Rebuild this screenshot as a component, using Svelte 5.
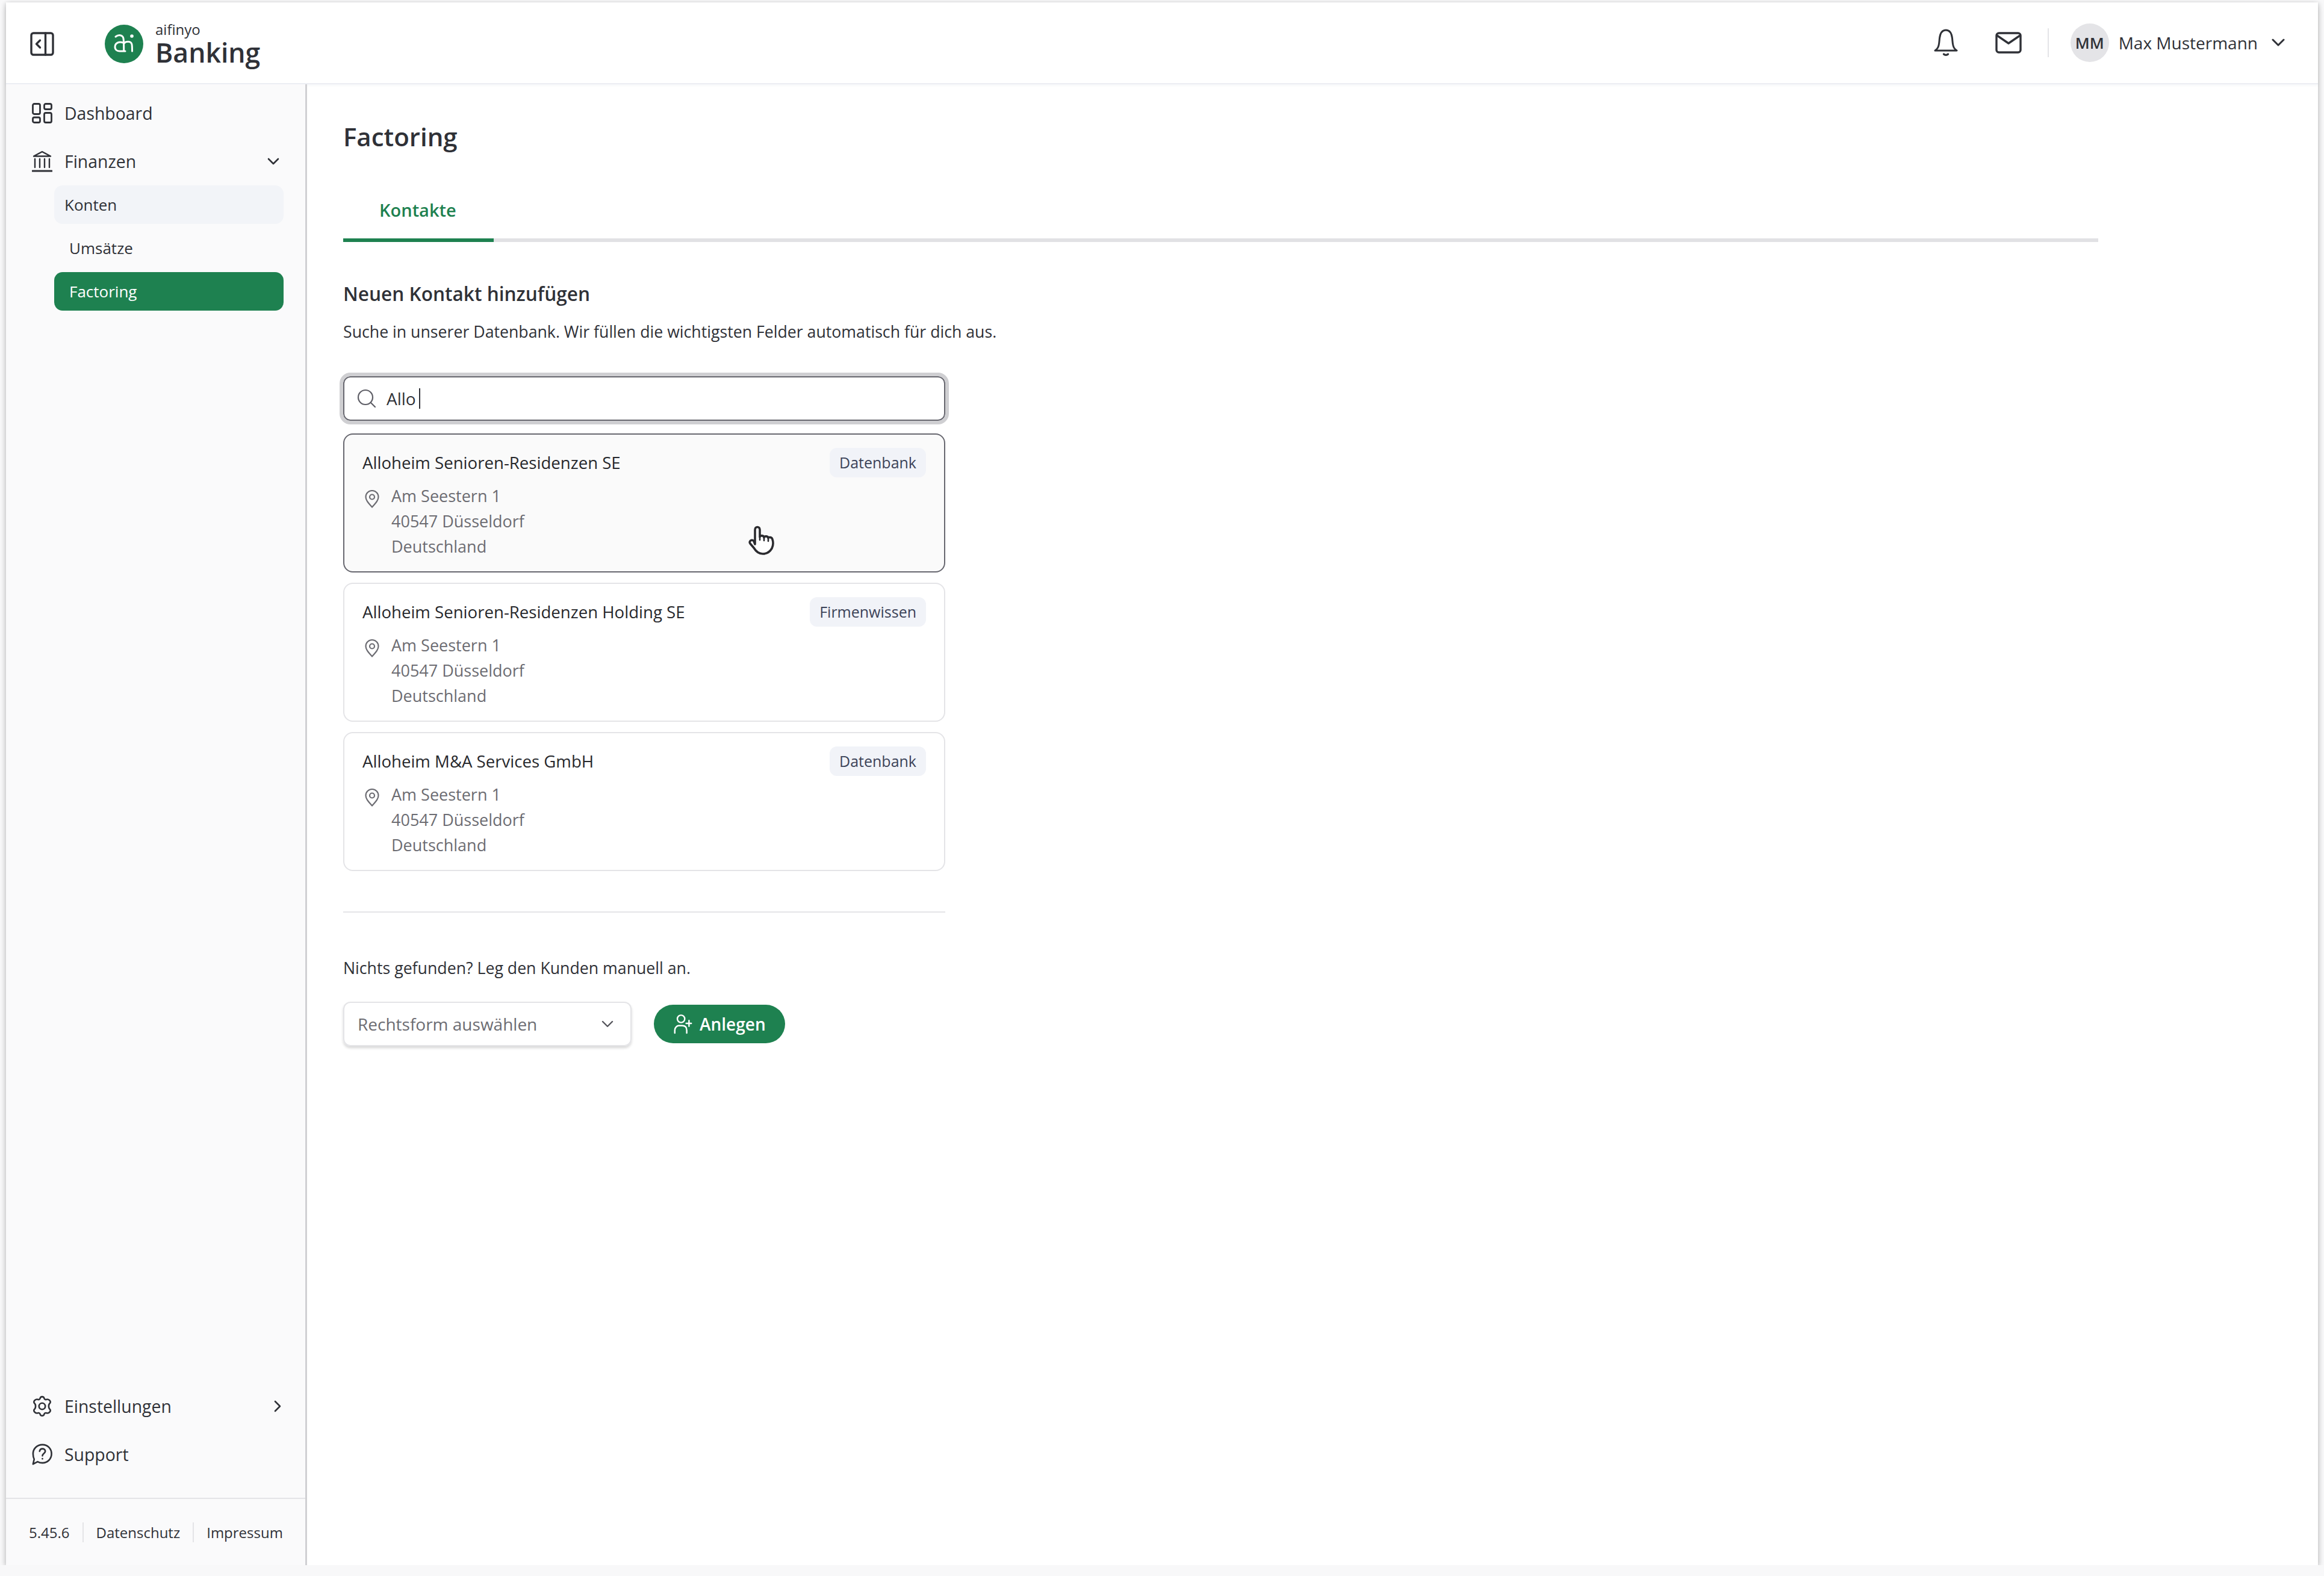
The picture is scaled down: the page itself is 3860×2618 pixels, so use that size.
<script>
  const contacts = [
    { name: "Alloheim Senioren-Residenzen SE", source: "Datenbank", hovered: true },
    { name: "Alloheim Senioren-Residenzen Holding SE", source: "Firmenwissen", hovered: false },
    { name: "Alloheim M&A Services GmbH", source: "Datenbank", hovered: false }
  ];
  const address = ["Am Seestern 1", "40547 Düsseldorf", "Deutschland"];
</script>

<div class="frame">
  <header class="topbar">
    <div class="brand">
      <svg class="toggle" viewBox="0 0 40 40" fill="none" stroke="currentColor" stroke-width="3.4" stroke-linecap="round" stroke-linejoin="round">
        <rect x="2" y="2" width="36" height="36" rx="3.5" />
        <path d="M25.500 2v36M16.500 14l-6 6 6 6" />
      </svg>
      <svg class="logo" viewBox="0 0 64 64">
        <circle cx="32" cy="32" r="32" fill="#1e8150" />
        <g fill="none" stroke="#fff" stroke-width="3" stroke-linecap="round">
          <path d="M18 20c5-4 12-3 13 3 .7 4 .7 11 .7 20" />
          <path d="M31 30c-8-3-14 1-14 7 0 5 4 7 8 7h9" />
          <path d="M32 31c3-4 12-4 13 2 .5 3 .5 7 .5 11" />
        </g>
        <circle cx="45" cy="19" r="2.800" fill="#fff" />
      </svg>
      <div class="wordmark">
        <span class="company">aifinyo</span>
        <span class="product">Banking</span>
      </div>
    </div>
    <div class="account">
      <svg class="bell" viewBox="0 0 40 46" fill="none" stroke="currentColor" stroke-width="3" stroke-linecap="round" stroke-linejoin="round">
        <path d="M2 36c3-2 5-4.500 6-8.500 1-4 1-7 1.500-12C10.500 7 14 2 20 2s9.500 5 10.500 13.500c.5 5 .5 8 1.500 12 1 4 3 6.500 6 8.500z" />
        <path d="M16.500 42c2 1.800 5 1.800 7 0" stroke-width="3.400" />
      </svg>
      <svg class="mail" viewBox="0 0 44 36" fill="none" stroke="currentColor" stroke-width="3.400" stroke-linecap="round" stroke-linejoin="round">
        <rect x="2" y="2" width="40" height="32" rx="4" />
        <path d="M3 6l19 13L41 6" />
      </svg>
      <span class="rule"></span>
      <span class="avatar">MM</span>
      <span class="username">Max Mustermann</span>
      <svg class="chev-user" viewBox="0 0 22 14" fill="none" stroke="currentColor" stroke-width="3" stroke-linecap="round" stroke-linejoin="round"><path d="M2 2l9 9 9-9" /></svg>
    </div>
  </header>

  <div class="body">
    <aside class="sidebar">
      <nav class="nav">
        <a class="item">
          <svg class="icon" viewBox="0 0 34 34" fill="none" stroke="currentColor" stroke-width="2.800" stroke-linejoin="round">
            <rect x="1.500" y="1.500" width="12" height="17" rx="2.500" />
            <rect x="20.500" y="1.500" width="12" height="9" rx="2.500" />
            <rect x="1.500" y="24" width="12" height="8.500" rx="2.500" />
            <rect x="20.500" y="16.500" width="12" height="16" rx="2.500" />
          </svg>
          Dashboard
        </a>
        <a class="item">
          <svg class="icon" viewBox="0 0 34 36" fill="none" stroke="currentColor" stroke-width="2.400" stroke-linecap="round" stroke-linejoin="round">
            <path d="M3 9.500L17 2l14 7.500z" />
            <path d="M5 14v14M13 14v14M21 14v14M29 14v14" />
            <path d="M1 34h32" stroke-width="3" />
          </svg>
          Finanzen
          <svg class="chev chev-down" viewBox="0 0 20 12" fill="none" stroke="currentColor" stroke-width="2.600" stroke-linecap="round" stroke-linejoin="round"><path d="M2 2l8 8 8-8" /></svg>
        </a>
        <a class="sub sub-open">Konten</a>
        <a class="sub">Umsätze</a>
        <a class="sub sub-active">Factoring</a>
      </nav>

      <nav class="nav nav-bottom">
        <a class="item">
          <svg class="icon" viewBox="0 0 34 38" fill="none" stroke="currentColor" stroke-width="2.800" stroke-linejoin="round">
            <path d="M13.500 5c.8-3.600 6.200-3.600 7 0 .4 1.800 2.300 2.800 4 2.200 4.500-1.500 9.500 4 5.500 7-2 2-2 7.600 0 9.600 4 3-1 8.500-5.500 7-1.700-.6-3.600.4-4 2.200-.8 3.600-6.200 3.600-7 0-.4-1.800-2.300-2.800-4-2.200-4.500 1.500-9.500-4-5.500-7 2-2 2-7.600 0-9.600-4-3 1-8.500 5.500-7 1.700.6 3.600-.4 4-2.200z" />
            <circle cx="17" cy="19" r="5.500" />
          </svg>
          Einstellungen
          <svg class="chev chev-right" viewBox="0 0 12 20" fill="none" stroke="currentColor" stroke-width="2.600" stroke-linecap="round" stroke-linejoin="round"><path d="M2 2l8 8-8 8" /></svg>
        </a>
        <a class="item">
          <svg class="icon" viewBox="0 0 36 38" fill="none" stroke="currentColor" stroke-width="2.800" stroke-linecap="round" stroke-linejoin="round">
            <path d="M18.500 2C28 2 34.500 9 34.500 18S27.500 34 18.500 34c-3 0-6-.8-8.500-2.200L2 36l2-8.500C2.700 25 2 21.500 2 18 2 9 9 2 18.500 2z" />
            <path d="M13.500 13.500c.6-3 2.600-4.500 5-4.500 2.800 0 5 1.800 5 4.500 0 4-5 4-5 8" />
            <path d="M18.500 26.500v.3" />
          </svg>
          Support
        </a>
      </nav>

      <footer class="meta">
        <span>5.45.6</span>
        <span>Datenschutz</span>
        <span>Impressum</span>
      </footer>
    </aside>

    <main class="main">
      <h1>Factoring</h1>
      <div class="tabs"><span class="tab">Kontakte</span></div>

      <h2>Neuen Kontakt hinzufügen</h2>
      <p class="lead">Suche in unserer Datenbank. Wir füllen die wichtigsten Felder automatisch für dich aus.</p>

      <div class="column">
        <div class="search">
          <svg viewBox="0 0 32 32" fill="none" stroke="currentColor" stroke-width="2.200" stroke-linecap="round"><circle cx="14" cy="14" r="12" /><path d="M23 23l7 7" /></svg>
          <span>Allo</span><i class="caret"></i>
        </div>

        <ul class="results">
          {#each contacts as contact}
            <li class="card" class:hovered={contact.hovered}>
              <div class="card-head">
                <span class="card-name">{contact.name}</span>
                <span class="badge">{contact.source}</span>
              </div>
              <div class="card-address">
                <svg viewBox="0 0 24 30" fill="none" stroke="currentColor" stroke-width="2.200" stroke-linejoin="round">
                  <path d="M12 28.500C6 21.500 1.500 17 1.500 11.500a10.500 10.500 0 0 1 21 0C22.500 17 18 21.500 12 28.500z" />
                  <circle cx="12" cy="11.500" r="4" />
                </svg>
                <div>
                  {#each address as line}
                    <div>{line}</div>
                  {/each}
                </div>
              </div>
              {#if contact.hovered}
                <svg class="cursor" viewBox="0 0 48 50" fill="#fff" stroke="#2b2b2f" stroke-width="3.600" stroke-linejoin="round" stroke-linecap="round">
                  <path d="M11 31V7c0-6 8-6 8 0v12c0-3 7-3 7 1 0-3 7-3 7 1 0-2.500 6-2 7 2 1.500 5 1 11-1 15-3 5-8 9-15 9-8 0-12-5-15-10l-6-7c-3-4 3-8 6-4z" />
                  <path d="M19 19v5M26 20v5M33 21v5" stroke-width="2.600" />
                </svg>
              {/if}
            </li>
          {/each}
        </ul>

        <hr />

        <p class="manual">Nichts gefunden? Leg den Kunden manuell an.</p>
        <div class="actions">
          <div class="select">
            <span>Rechtsform auswählen</span>
            <svg viewBox="0 0 20 12" fill="none" stroke="currentColor" stroke-width="2.400" stroke-linecap="round" stroke-linejoin="round"><path d="M2 2l8 8 8-8" /></svg>
          </div>
          <button class="create">
            <svg viewBox="0 0 32 36" fill="none" stroke="currentColor" stroke-width="2.600" stroke-linecap="round">
              <circle cx="13" cy="9" r="6.500" />
              <path d="M2 34v-5c0-5 4-8 7-8h6c5 0 8 3 8 8v5M27 12v10M22 17h9" />
            </svg>
            Anlegen
          </button>
        </div>
      </div>
    </main>
  </div>
</div>

<style>
  :global(body) {
    background: #f8f8f9;
  }

  .frame {
    box-sizing: border-box;
    display: flex;
    flex-direction: column;
    width: 3840px;
    height: 2596px;
    margin: 4px 0 0 10px;
    background: #fff;
    color: #2f3137;
    font-family: "Open Sans", sans-serif;
    box-shadow: -3px 0 6px rgba(0, 0, 0, 0.08), 3px 0 6px rgba(0, 0, 0, 0.08), 0 6px 10px rgba(0, 0, 0, 0.16);
  }

  .topbar {
    box-sizing: border-box;
    flex: none;
    display: flex;
    align-items: center;
    justify-content: space-between;
    height: 136px;
    padding: 0 55px 0 40px;
    border-bottom: 2px solid #eceef3;
    box-shadow: 0 2px 4px rgba(90, 100, 130, 0.06);
  }

  .brand,
  .account {
    display: flex;
    align-items: center;
  }

  .toggle {
    width: 40px;
    height: 40px;
    margin-top: 4px;
  }

  .logo {
    width: 64px;
    height: 64px;
    margin: 4px 0 0 84px;
  }

  .wordmark {
    display: flex;
    flex-direction: column;
    margin: 3px 0 0 20px;
  }

  .company {
    font-size: 24px;
    line-height: 26px;
    margin-top: 2px;
  }

  .product {
    font-size: 44.5px;
    line-height: 50px;
    font-weight: 600;
  }

  .bell {
    width: 40px;
    height: 46px;
  }

  .mail {
    width: 44px;
    height: 36px;
    margin: 0 0 0 62px;
  }

  .rule {
    width: 2px;
    height: 48px;
    margin: 0 36px 0 43px;
    background: #e4e4e7;
  }

  .avatar {
    display: flex;
    align-items: center;
    justify-content: center;
    width: 64px;
    height: 64px;
    border-radius: 50%;
    background: #e4e4e7;
    font-size: 26px;
    font-weight: 600;
  }

  .username {
    margin: 0 23px 0 16px;
    font-size: 28px;
  }

  .chev-user {
    width: 22px;
    height: 14px;
  }

  .body {
    flex: 1;
    display: flex;
    min-height: 0;
  }

  .sidebar {
    box-sizing: border-box;
    flex: none;
    display: flex;
    flex-direction: column;
    width: 500px;
    background: #fafafb;
    border-right: 3px solid #d0d0d3;
  }

  .nav {
    display: flex;
    flex-direction: column;
    gap: 8px;
    padding: 16px 36px 0 43px;
  }

  .nav-bottom {
    gap: 16px;
    margin-top: auto;
    padding-top: 0;
    padding-bottom: 40px;
  }

  .item {
    position: relative;
    display: flex;
    align-items: center;
    gap: 20px;
    height: 64px;
    font-size: 28.4px;
    font-weight: 500;
  }

  .item + .item {
    margin-top: 8px;
  }

  .nav-bottom .item + .item {
    margin-top: 0;
  }

  .icon {
    flex: none;
    width: 34px;
    height: 36px;
  }

  .chev {
    margin-left: auto;
  }

  .chev-down {
    width: 20px;
    height: 12px;
    margin-right: 7px;
  }

  .chev-right {
    width: 12px;
    height: 20px;
    margin-right: 4px;
  }

  .sub {
    display: flex;
    align-items: center;
    height: 64px;
    margin-left: 37px;
    padding-left: 25px;
    border-radius: 14px;
    font-size: 26px;
  }

  .sub-open {
    padding-left: 17px;
    background: #f2f4f8;
  }

  .sub-active {
    background: #1e8150;
    color: #fff;
  }

  .meta {
    box-sizing: border-box;
    flex: none;
    display: flex;
    align-items: center;
    height: 112px;
    padding: 0 0 0 38px;
    border-top: 2px solid #e4e4e7;
    font-size: 24px;
  }

  .meta span + span {
    margin-left: 21px;
    padding-left: 21px;
    border-left: 2px solid #e4e4e7;
  }

  .main {
    flex: 1;
    padding: 59px 0 0 60px;
  }

  h1 {
    margin: 0 0 54px;
    font-size: 42px;
    line-height: 56px;
    font-weight: 600;
  }

  .tabs {
    width: 2915px;
    border-bottom: 6px solid #e1e1e4;
  }

  .tab {
    display: block;
    box-sizing: border-box;
    width: 250px;
    margin-bottom: -6px;
    padding: 20px 0 27px 60px;
    border-bottom: 6px solid #1e8150;
    color: #1e8150;
    font-size: 29px;
    line-height: 40px;
    font-weight: 600;
  }

  h2 {
    margin: 64px 0 0;
    font-size: 31.6px;
    line-height: 44px;
    font-weight: 600;
  }

  .lead {
    margin: 21px 0 0;
    font-size: 26.7px;
    line-height: 40px;
  }

  .column {
    width: 1000px;
    margin-top: 54px;
  }

  .search {
    box-sizing: border-box;
    display: flex;
    align-items: center;
    height: 74px;
    padding: 0 21px;
    border: 2px solid #67676f;
    border-radius: 12px;
    outline: 6px solid #cfcfd2;
    font-size: 28px;
  }

  .search svg {
    width: 32px;
    height: 32px;
    margin-right: 17px;
    color: #5e5e66;
  }

  .caret {
    width: 2px;
    height: 34px;
    margin-left: 5px;
    background: #2f3137;
  }

  .results {
    display: flex;
    flex-direction: column;
    gap: 17px;
    margin: 21px 0 0;
    padding: 0;
    list-style: none;
  }

  .card {
    position: relative;
    box-sizing: border-box;
    height: 231px;
    padding: 22px 30px;
    border: 2px solid #e4e4e7;
    border-radius: 16px;
  }

  .hovered {
    border-color: #67676f;
    background: #fafafa;
  }

  .card-head {
    display: flex;
    align-items: flex-start;
    justify-content: space-between;
  }

  .card-name {
    font-size: 27.6px;
    line-height: 48px;
    font-weight: 500;
    color: #27282c;
  }

  .badge {
    height: 49px;
    padding: 0 16px;
    border-radius: 12px;
    background: #f1f3f8;
    color: #3c4358;
    font-size: 25px;
    line-height: 49px;
    font-weight: 500;
  }

  .card-address {
    display: flex;
    gap: 20px;
    margin: 10px 0 0 4px;
    color: #6c6c72;
    font-size: 27px;
    line-height: 42px;
  }

  .card-address svg {
    flex: none;
    width: 24px;
    height: 30px;
    margin-top: 11px;
  }

  .cursor {
    position: absolute;
    left: 671px;
    top: 151px;
    width: 48px;
    height: 50px;
  }

  hr {
    height: 2px;
    margin: 67px 0 0;
    border: 0;
    background: #e4e4e7;
  }

  .manual {
    margin: 72px 0 0;
    font-size: 26.7px;
    line-height: 40px;
  }

  .actions {
    display: flex;
    align-items: center;
    gap: 37px;
    margin-top: 36px;
  }

  .select {
    box-sizing: border-box;
    display: flex;
    align-items: center;
    justify-content: space-between;
    width: 479px;
    height: 74px;
    padding: 0 28px 0 22px;
    border: 2px solid #e4e4e7;
    border-radius: 12px;
    box-shadow: 0 3px 4px rgba(0, 0, 0, 0.16);
    color: #6c6c72;
    font-size: 28px;
  }

  .select svg {
    width: 20px;
    height: 12px;
    color: #55555c;
  }

  .create {
    display: flex;
    align-items: center;
    gap: 12px;
    width: 218px;
    height: 64px;
    padding: 0 0 0 32px;
    border: 0;
    border-radius: 32px;
    background: #1e8150;
    color: #fff;
    font-family: inherit;
    font-size: 28px;
    font-weight: 600;
  }

  .create svg {
    width: 32px;
    height: 34px;
  }
</style>
